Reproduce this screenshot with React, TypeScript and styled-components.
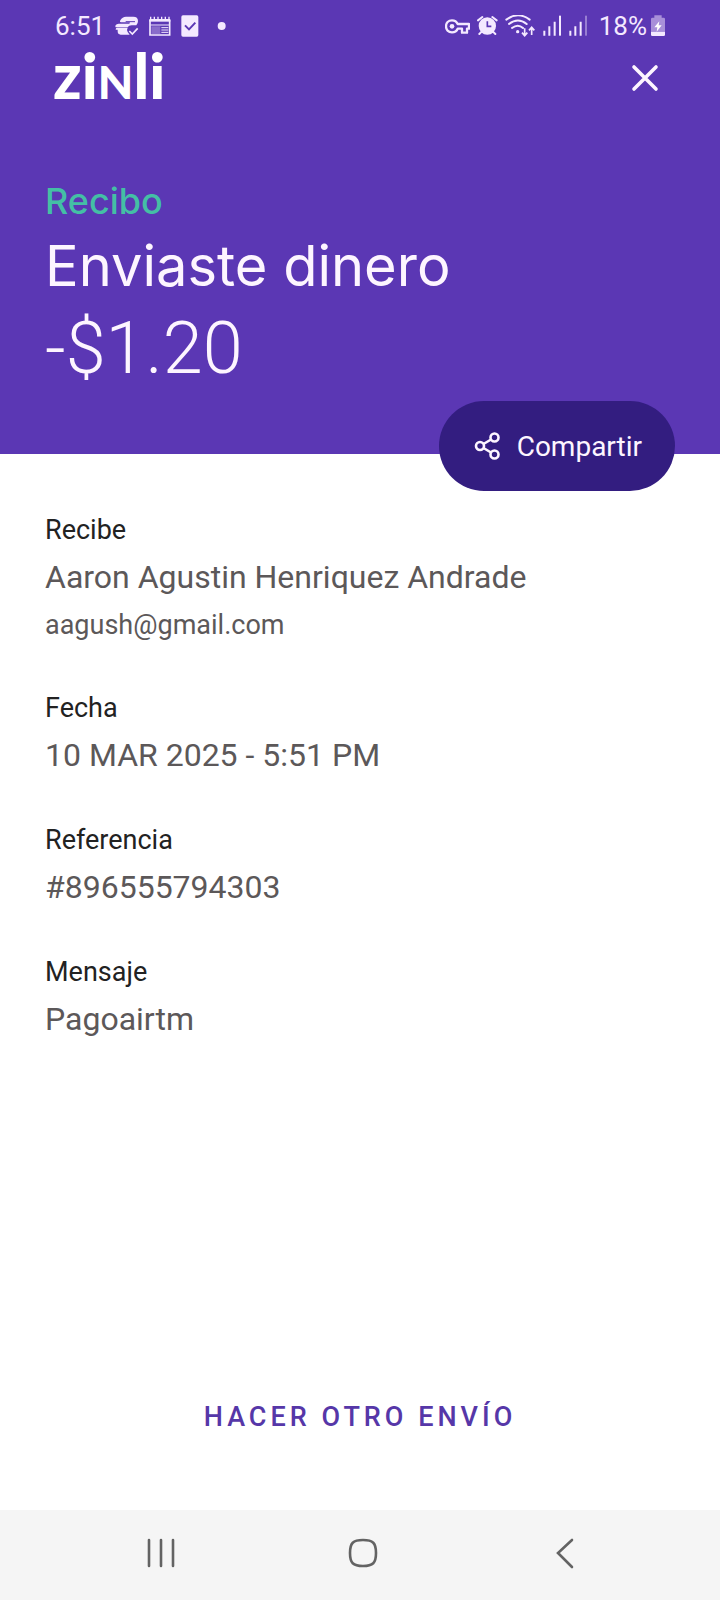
import React from "react";
import styled, { createGlobalStyle } from "styled-components";

const GlobalStyle = createGlobalStyle`
  * { box-sizing: border-box; }
  body {
    margin: 0;
    background: #ffffff;
    font-family: Roboto, "Liberation Sans", sans-serif;
  }
  h1, h2, p, dl, dt, dd { margin: 0; font-weight: 400; }
  button { border: 0; padding: 0; background: none; font: inherit; cursor: pointer; }
  svg { display: block; flex: none; }
`;

const Screen = styled.div`
  display: flex;
  flex-direction: column;
  min-height: 100vh;
`;

const Hero = styled.header`
  position: relative;
  background: #5b37b4;
  color: #fdf5ff;
  padding-bottom: 61px;
`;

const StatusBar = styled.div`
  display: flex;
  justify-content: space-between;
  align-items: center;
  height: 52px;
  padding: 0 55px;
  font-size: 26px;
  line-height: 30px;
  color: #f4e9ff;
`;

const StatusGroup = styled.div<{ $gap: number }>`
  display: flex;
  align-items: center;
  gap: ${(p) => p.$gap}px;
`;

const Charge = styled.span`
  display: flex;
  align-items: center;
  gap: 4px;
  margin-left: 4px;
`;

const Brand = styled.div`
  display: flex;
  justify-content: space-between;
  align-items: flex-start;
  height: 52px;
  padding: 0 57px 0 53px;
`;

const Wordmark = styled.span`
  font-family: Lato, sans-serif;
  font-size: 62px;
  line-height: 46px;
  font-weight: 900;
  color: #ffffff;
`;

const SmallCap = styled.span`
  font-size: 46px;
`;

const CloseButton = styled.button`
  padding: 8px 0;
  color: #fdf5ff;
`;

const Summary = styled.div`
  padding: 71px 45px 0;
`;

const Eyebrow = styled.p`
  font-family: Inter, sans-serif;
  font-size: 36px;
  line-height: 52px;
  font-weight: 500;
  color: #44bfa5;
`;

const Title = styled.h1`
  font-family: Inter, sans-serif;
  font-size: 56px;
  line-height: 78px;
`;

const Amount = styled.p`
  font-size: 72px;
  line-height: 88px;
  font-weight: 300;
`;

const ShareButton = styled.button`
  position: absolute;
  right: 45px;
  bottom: -37px;
  display: flex;
  align-items: center;
  gap: 16px;
  height: 90px;
  padding: 0 33px 0 35px;
  border-radius: 45px;
  background: #331d80;
  color: #fdf5ff;
  font-size: 28px;
`;

const Details = styled.dl`
  flex: 1;
  display: flex;
  flex-direction: column;
  gap: 38px;
  padding: 54px 45px;
`;

const Label = styled.dt`
  font-size: 27px;
  line-height: 44px;
  color: #222222;
`;

const Value = styled.dd`
  font-size: 32px;
  line-height: 50px;
  color: #5c5859;
`;

const SubValue = styled.dd`
  font-size: 27px;
  line-height: 46px;
  color: #5c5859;
`;

const Actions = styled.div`
  display: flex;
  justify-content: center;
  padding-bottom: 67px;
`;

const LinkButton = styled.button`
  font-size: 27px;
  line-height: 52px;
  font-weight: 500;
  letter-spacing: 4px;
  color: #5637a8;
`;

const NavBar = styled.nav`
  display: grid;
  grid-template-columns: repeat(3, 202px);
  justify-content: center;
  height: 90px;
  padding: 0 0 4px 5px;
  background: #f5f5f5;
`;

const NavButton = styled.button`
  display: flex;
  align-items: center;
  justify-content: center;
`;

type StatusIconProps = { x: number; w: number; children: React.ReactNode };

const StatusIcon = ({ x, w, children }: StatusIconProps) => (
  <svg width={w / 3} height="22" viewBox={`${x} 46 ${w} 66`} fill="none" stroke="currentColor" aria-hidden="true">
    {children}
  </svg>
);

const TransferIcon = () => (
  <StatusIcon x={228} w={72}>
    <path
      d="M244 62q6-11 17-11h22q14 0 14 13 0 8-5 13h-14q-9 0-12 6h-33q-6 0-3-6 2-5 9-5h32l2-4h-27q-5 0-2-6z"
      fill="currentColor"
      stroke="none"
    />
    <path d="M234 84h32q-4 7 0 13l6 8h-27q-9 0-9-10v-5h-6q0-6 4-6z" fill="currentColor" stroke="none" />
    <path d="M260 66h28" stroke="#5b37b4" strokeWidth="3" />
    <path d="M271 94l9 9 16-17" strokeWidth="5" />
  </StatusIcon>
);

const CalendarIcon = () => (
  <StatusIcon x={323} w={66}>
    <path d="M326 61v45h59V61" strokeWidth="5" />
    <path d="M324 62h63" strokeWidth="8" />
    <path d="M328 51v10M339 51v10M350 51v10M361 51v10M372 51v10M383 51v10" strokeWidth="4" />
    <path d="M330 80h27v23h-27z" fill="currentColor" stroke="none" opacity=".3" />
    <path d="M328 76h55M360 84h21M360 91h21M360 98h21" strokeWidth="3" />
  </StatusIcon>
);

const TaskIcon = () => (
  <StatusIcon x={422} w={54}>
    <rect x="423" y="47" width="51" height="64" rx="5" fill="currentColor" stroke="none" />
    <path d="M434 77l12 12 19-20" stroke="#5b37b4" strokeWidth="6" />
  </StatusIcon>
);

const DotIcon = () => (
  <StatusIcon x={508} w={54}>
    <circle cx="546" cy="79" r="12" fill="currentColor" stroke="none" />
  </StatusIcon>
);

const KeyIcon = () => (
  <StatusIcon x={42} w={75}>
    <path
      d="M80 73h34v14h-6v12H93V87H80c-3 7-9 11-17 11-11 0-18-8-18-18s7-18 18-18c8 0 14 4 17 11z"
      strokeWidth="7"
      strokeLinejoin="round"
    />
    <circle cx="63" cy="80" r="7" fill="currentColor" stroke="none" />
  </StatusIcon>
);

const AlarmIcon = () => (
  <StatusIcon x={144} w={63}>
    <circle cx="175" cy="79" r="26" fill="currentColor" stroke="none" />
    <path d="M147 62l13-10M203 62l-13-10M158 96l-7 7M192 96l7 7" strokeWidth="6" strokeLinecap="round" />
    <path d="M175 65v15h12" stroke="#5b37b4" strokeWidth="5" />
  </StatusIcon>
);

const WifiIcon = () => (
  <StatusIcon x={231} w={93}>
    <path d="M235 60q35-26 70 0M243 73q27-21 53 0M252 85q18-14 33 0" strokeWidth="6" strokeLinecap="round" />
    <circle cx="269" cy="96" r="5" fill="currentColor" stroke="none" />
    <path d="M290 86v21M282 99l8 9 8-9M311 106V84M303 92l8-9 8 9" strokeWidth="5" />
  </StatusIcon>
);

const SignalIcon = ({ weak = false }: { weak?: boolean }) => (
  <StatusIcon x={340} w={57}>
    <path d="M344 93v15M359 80v28M375 66v42" strokeWidth="6" />
    <path d="M391 48v60" strokeWidth="6" opacity={weak ? 0.4 : 1} />
  </StatusIcon>
);

const BatteryIcon = () => (
  <StatusIcon x={663} w={42}>
    <path d="M673 47h22v7h6q4 0 4 4v38h-42V58q0-4 4-4h6z" fill="#a88fd9" stroke="none" />
    <path d="M663 96h42v9q0 4-4 4h-34q-4 0-4-4z" fill="currentColor" stroke="none" />
    <path d="M688 65l-15 18h9l-2 13 15-19h-9z" fill="#ffffff" stroke="none" />
  </StatusIcon>
);

const CloseIcon = () => (
  <svg width="36" height="36" viewBox="0 0 36 36" fill="none" stroke="currentColor" strokeWidth="3.6" strokeLinecap="round">
    <path d="M7 7l22 22M29 7L7 29" />
  </svg>
);

const ShareIcon = () => (
  <svg width="27" height="28" viewBox="0 0 27 28" fill="none" stroke="currentColor" strokeWidth="2.6">
    <circle cx="6" cy="14" r="4" />
    <circle cx="20.500" cy="5.500" r="4" />
    <circle cx="20.500" cy="22.500" r="4" />
    <path d="M9.500 12l7.500-4.500M9.500 16l7.500 4.500" />
  </svg>
);

const NavIcon = ({ children }: { children: React.ReactNode }) => (
  <svg width="32" height="32" viewBox="0 0 32 32" fill="none" stroke="#636363" strokeWidth="2.6" strokeLinecap="round">
    {children}
  </svg>
);

type Detail = { label: string; value: string; note?: string };

const details: Detail[] = [
  { label: "Recibe", value: "Aaron Agustin Henriquez Andrade", note: "aagush@gmail.com" },
  { label: "Fecha", value: "10 MAR 2025 - 5:51 PM" },
  { label: "Referencia", value: "#896555794303" },
  { label: "Mensaje", value: "Pagoairtm" },
];

export default function App() {
  return (
    <Screen>
      <GlobalStyle />
      <Hero>
        <StatusBar>
          <StatusGroup $gap={10}>
            <span>6:51</span>
            <TransferIcon />
            <CalendarIcon />
            <TaskIcon />
            <DotIcon />
          </StatusGroup>
          <StatusGroup $gap={7}>
            <KeyIcon />
            <AlarmIcon />
            <WifiIcon />
            <SignalIcon />
            <SignalIcon weak />
            <Charge>
              18%
              <BatteryIcon />
            </Charge>
          </StatusGroup>
        </StatusBar>
        <Brand>
          <Wordmark>
            zi<SmallCap>N</SmallCap>li
          </Wordmark>
          <CloseButton aria-label="Cerrar">
            <CloseIcon />
          </CloseButton>
        </Brand>
        <Summary>
          <Eyebrow>Recibo</Eyebrow>
          <Title>Enviaste dinero</Title>
          <Amount>-$1.20</Amount>
        </Summary>
        <ShareButton>
          <ShareIcon />
          Compartir
        </ShareButton>
      </Hero>
      <Details>
        {details.map((d) => (
          <div key={d.label}>
            <Label>{d.label}</Label>
            <Value>{d.value}</Value>
            {d.note && <SubValue>{d.note}</SubValue>}
          </div>
        ))}
      </Details>
      <Actions>
        <LinkButton>HACER OTRO ENVÍO</LinkButton>
      </Actions>
      <NavBar>
        <NavButton aria-label="Recientes">
          <NavIcon>
            <path d="M4 3v26M16 3v26M28 3v26" />
          </NavIcon>
        </NavButton>
        <NavButton aria-label="Inicio">
          <NavIcon>
            <path d="M16 3C26 3 29 6 29 16S26 29 16 29 3 26 3 16 6 3 16 3z" />
          </NavIcon>
        </NavButton>
        <NavButton aria-label="Atrás">
          <NavIcon>
            <path d="M23 3L9 16l14 14" />
          </NavIcon>
        </NavButton>
      </NavBar>
    </Screen>
  );
}
